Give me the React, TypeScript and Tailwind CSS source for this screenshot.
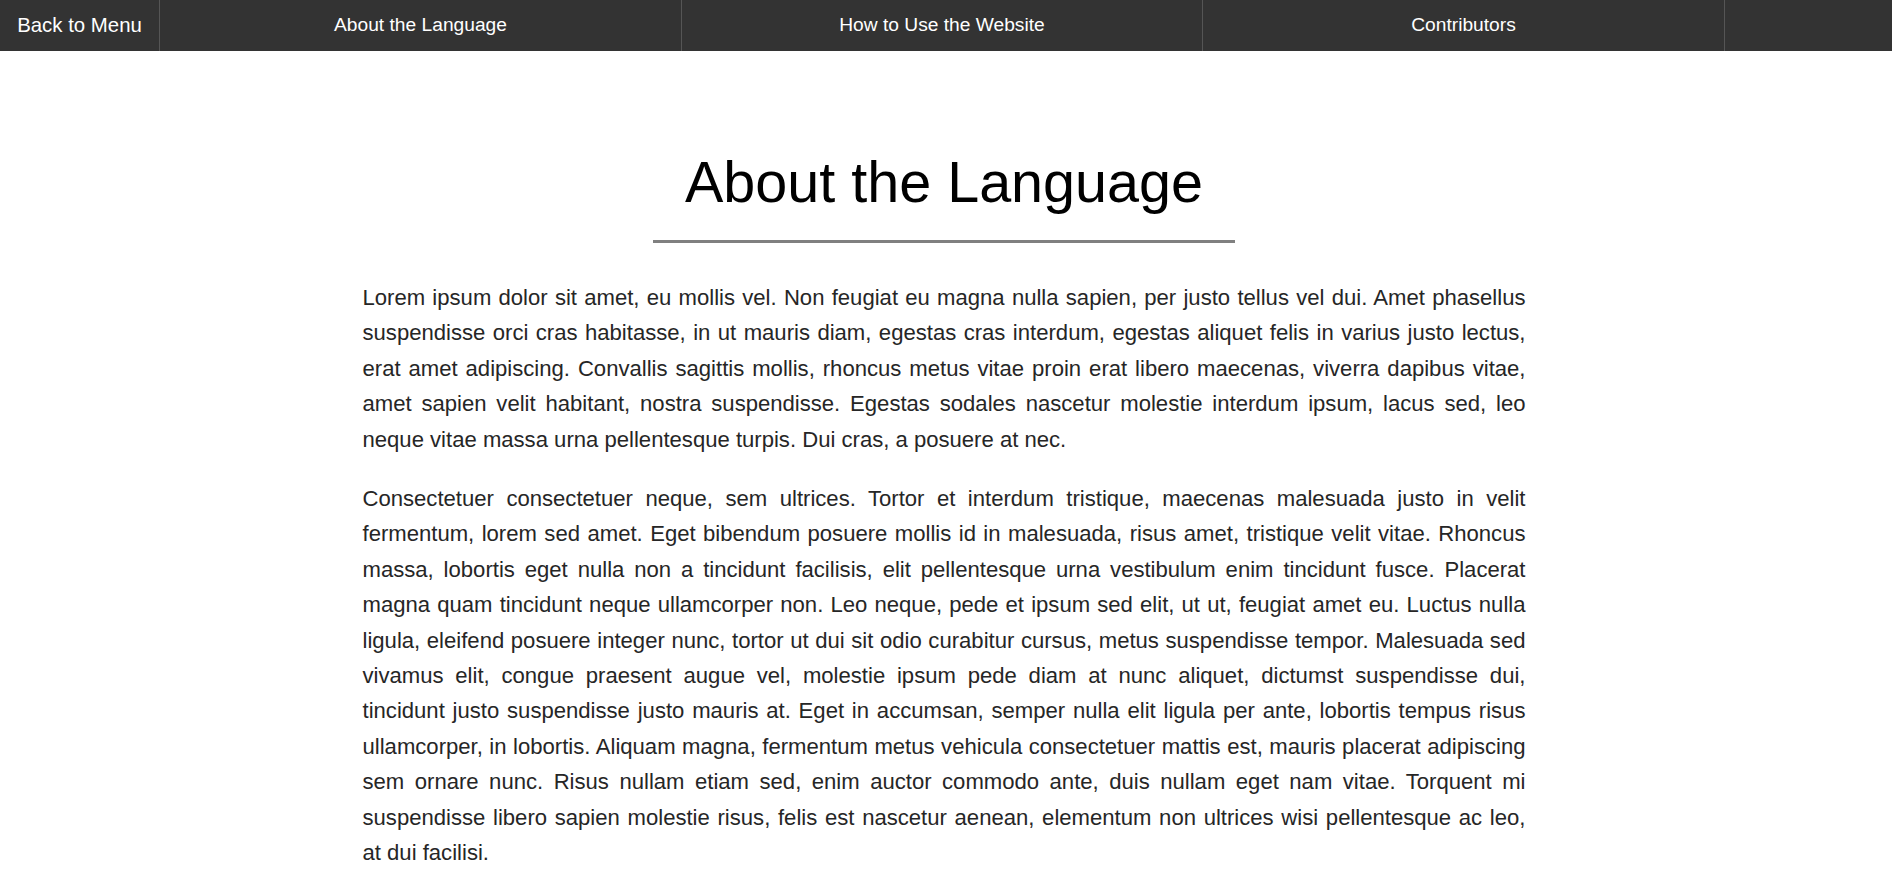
import React from "react";

const P1 =
  "Lorem ipsum dolor sit amet, eu mollis vel. Non feugiat eu magna nulla sapien, per justo tellus vel dui. Amet phasellus suspendisse orci cras habitasse, in ut mauris diam, egestas cras interdum, egestas aliquet felis in varius justo lectus, erat amet adipiscing. Convallis sagittis mollis, rhoncus metus vitae proin erat libero maecenas, viverra dapibus vitae, amet sapien velit habitant, nostra suspendisse. Egestas sodales nascetur molestie interdum ipsum, lacus sed, leo neque vitae massa urna pellentesque turpis. Dui cras, a posuere at nec.";

const P2 =
  "Consectetuer consectetuer neque, sem ultrices. Tortor et interdum tristique, maecenas malesuada justo in velit fermentum, lorem sed amet. Eget bibendum posuere mollis id in malesuada, risus amet, tristique velit vitae. Rhoncus massa, lobortis eget nulla non a tincidunt facilisis, elit pellentesque urna vestibulum enim tincidunt fusce. Placerat magna quam tincidunt neque ullamcorper non. Leo neque, pede et ipsum sed elit, ut ut, feugiat amet eu. Luctus nulla ligula, eleifend posuere integer nunc, tortor ut dui sit odio curabitur cursus, metus suspendisse tempor. Malesuada sed vivamus elit, congue praesent augue vel, molestie ipsum pede diam at nunc aliquet, dictumst suspendisse dui, tincidunt justo suspendisse justo mauris at. Eget in accumsan, semper nulla elit ligula per ante, lobortis tempus risus ullamcorper, in lobortis. Aliquam magna, fermentum metus vehicula consectetuer mattis est, mauris placerat adipiscing sem ornare nunc. Risus nullam etiam sed, enim auctor commodo ante, duis nullam eget nam vitae. Torquent mi suspendisse libero sapien molestie risus, felis est nascetur aenean, elementum non ultrices wisi pellentesque ac leo, at dui facilisi.";

export default function App() {
  return (
    <div className="min-h-screen bg-white font-['Liberation_Sans',Arial,sans-serif]">
      <nav className="flex h-[51px] bg-[#333333] text-white">
        <div className="flex w-[160px] items-center justify-center border-r border-[#555555] pb-[1px] text-[20.4px]">
          Back to Menu
        </div>
        <div className="flex w-[522px] items-center justify-center border-r border-[#555555] pb-[1px] text-[19.2px]">
          About the Language
        </div>
        <div className="flex w-[521px] items-center justify-center border-r border-[#555555] pb-[1px] text-[19.2px]">
          How to Use the Website
        </div>
        <div className="flex w-[522px] items-center justify-center border-r border-[#555555] pb-[1px] text-[19.2px]">
          Contributors
        </div>
        <div className="flex-1" />
      </nav>

      <main className="flex flex-col items-center pr-[4px] pt-[99px]">
        <h1 className="text-[57.5px] leading-[64px] text-black">About the Language</h1>
        <div className="mt-[26px] h-[3px] w-[582px] bg-[#808080]" />
        <div className="mt-[37px] w-[1163px] text-justify text-[22.1px] leading-[35.4px] text-[#262626]">
          <p className="mb-[24px]">{P1}</p>
          <p className="mb-[24px]">{P2}</p>
        </div>
      </main>
    </div>
  );
}
